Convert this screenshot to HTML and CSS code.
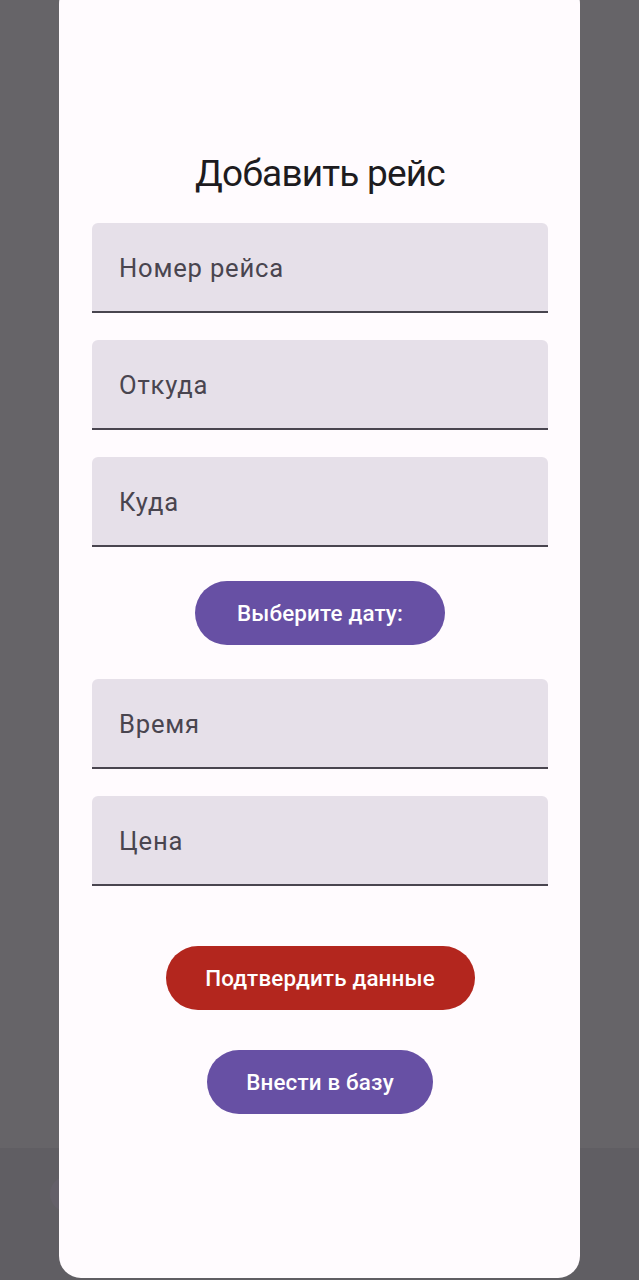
FILE: index.html
```html
<!DOCTYPE html>
<html lang="ru">
<head>
<meta charset="utf-8">
<title>Добавить рейс</title>
<link rel="stylesheet" href="styles.css">
</head>
<body>
<div class="screen">
  <div class="backdrop-main"></div>
  <div class="backdrop-nav"><span class="nav-dot"></span></div>
  <div class="dialog">
    <h1 class="title">Добавить рейс</h1>
    <div class="field"><span class="label">Номер рейса</span></div>
    <div class="field"><span class="label">Откуда</span></div>
    <div class="field"><span class="label">Куда</span></div>
    <button class="btn btn-purple btn-date">Выберите дату:</button>
    <div class="field field-after-btn"><span class="label">Время</span></div>
    <div class="field"><span class="label">Цена</span></div>
    <button class="btn btn-red btn-confirm">Подтвердить данные</button>
    <button class="btn btn-purple btn-db">Внести в базу</button>
  </div>
</div>
</body>
</html>
```
FILE: styles.css
```css
html, body {
  margin: 0;
  padding: 0;
}
body {
  width: 639px;
  height: 1280px;
  overflow: hidden;
  font-family: Roboto, "Noto Sans", sans-serif;
}
.screen {
  position: relative;
  width: 639px;
  height: 1280px;
  display: flex;
  flex-direction: column;
}
.backdrop-main {
  flex: 1;
  background: #666468;
}
.backdrop-nav {
  height: 132px;
  background: #605e63;
  position: relative;
}
.nav-dot {
  position: absolute;
  left: 50px;
  top: 28px;
  width: 36px;
  height: 36px;
  border-radius: 50%;
  background: #646069;
}
.dialog {
  position: absolute;
  left: 59px;
  top: -24px;
  width: 521px;
  height: 1302px;
  box-sizing: border-box;
  background: #fffbfe;
  border-radius: 28px 28px 22px 22px;
  padding: 175px 32px 0 33px;
  display: flex;
  flex-direction: column;
  align-items: center;
}
.title {
  margin: 0 0 27px;
  font-size: 37px;
  line-height: 45px;
  font-weight: 400;
  letter-spacing: -0.8px;
  color: #1d1b20;
}
.field {
  align-self: stretch;
  height: 88px;
  background: #e6e0e9;
  border-radius: 6px 6px 0 0;
  border-bottom: 2px solid #49454f;
  display: flex;
  align-items: center;
  padding-left: 27px;
  margin-bottom: 27px;
}
.label {
  font-size: 25.6px;
  letter-spacing: 0.8px;
  color: #49454f;
  position: relative;
  top: 1px;
}
.btn {
  height: 64px;
  border: none;
  border-radius: 32px;
  color: #ffffff;
  font-family: Roboto, "Noto Sans", sans-serif;
  font-size: 22.4px;
  font-weight: 500;
  letter-spacing: 0.16px;
  padding: 0;
}
.btn-purple {
  background: #6750a4;
}
.btn-red {
  background: #b3261e;
}
.btn-date {
  margin-top: 7px;
  margin-bottom: 34px;
  width: 250px;
}
.btn-confirm {
  margin-top: 33px;
  width: 309px;
}
.btn-db {
  margin-top: 40px;
  width: 226px;
}
```
